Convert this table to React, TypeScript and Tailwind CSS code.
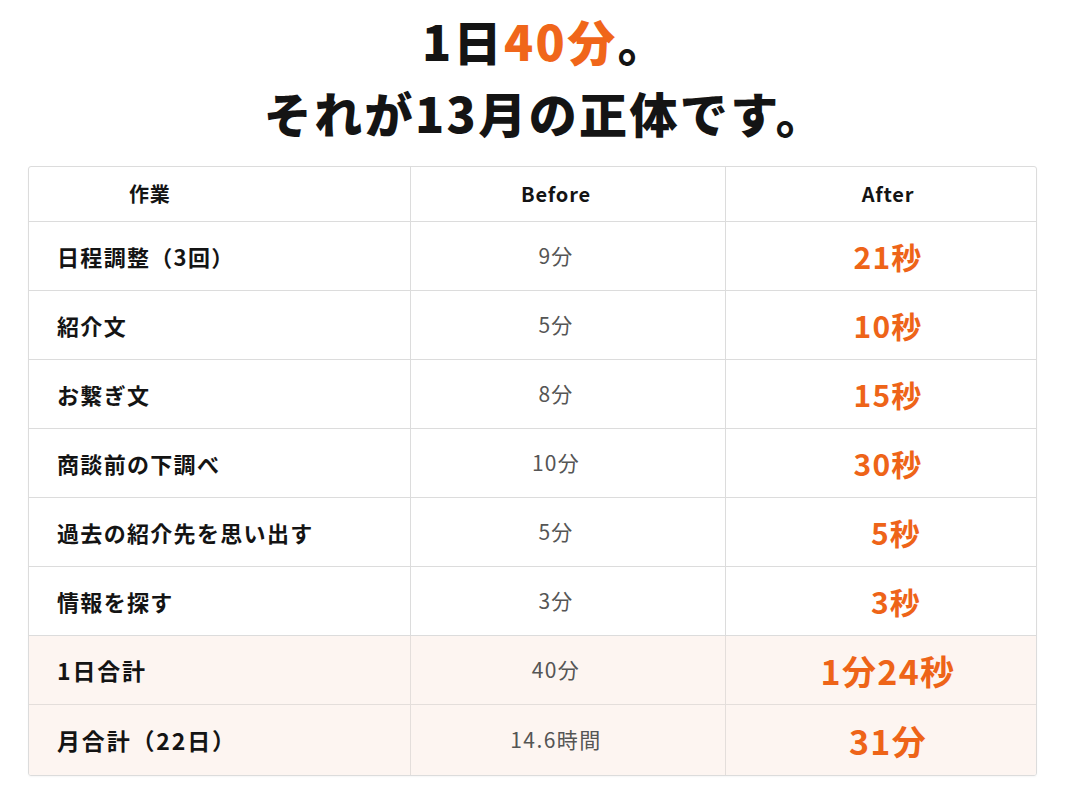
const rows = [
  { task: "日程調整（3回）", before: "9分", after: "21秒" },
  { task: "紹介文", before: "5分", after: "10秒" },
  { task: "お繋ぎ文", before: "8分", after: "15秒" },
  { task: "商談前の下調べ", before: "10分", after: "30秒" },
  { task: "過去の紹介先を思い出す", before: "5分", after: "5秒", pad: true },
  { task: "情報を探す", before: "3分", after: "3秒", pad: true },
];

const totals = [
  { task: "1日合計", before: "40分", after: "1分24秒" },
  { task: "月合計（22日）", before: "14.6時間", after: "31分" },
];

const font = { fontFamily: '"Noto Sans CJK JP", "Noto Sans", sans-serif' };

export default function App() {
  return (
    <div className="min-h-screen w-[1066px] bg-white text-[#141414]" style={font}>
      <h1 className="pl-[24px] pt-[4px] text-center text-[48px] font-black leading-[72px] tracking-[0.05em]">
        <span>1日</span>
        <span className="text-[#f0661a]">40分</span>
        <span>。</span>
        <br />
        それが13月の正体です。
      </h1>

      <div className="mx-[28px] mt-[18px] w-[1009px] overflow-hidden rounded-[3px] border border-[#dcdcdc] shadow-[0_1px_2px_rgba(0,0,0,0.04)]">
        <div className="grid h-[55px] grid-cols-[382px_315px_1fr] border-b border-[#dcdcdc] text-[20px] font-semibold tracking-[0.04em]">
          <div className="flex items-center border-r border-[#dcdcdc] pl-[100px]">作業</div>
          <div className="flex items-center justify-center border-r border-[#dcdcdc] pr-[24px]">Before</div>
          <div className="flex items-center justify-center pl-[14px]">After</div>
        </div>

        {rows.map((r) => (
          <div
            key={r.task}
            className="grid h-[69px] grid-cols-[382px_315px_1fr] border-b border-[#dcdcdc]"
          >
            <div className="flex items-center border-r border-[#dcdcdc] pl-[28px] text-[22px] font-bold tracking-[0.06em]">
              {r.task}
            </div>
            <div className="flex items-center justify-center border-r border-[#dcdcdc] pr-[24px] text-[21px] tracking-[0.06em] text-[#555]">
              {r.before}
            </div>
            <div
              className={
                r.pad
                  ? "flex items-center justify-center pl-[30px] text-[30px] font-bold tracking-[0.04em] text-[#ee6418]"
                  : "flex items-center justify-center pl-[14px] text-[30px] font-bold tracking-[0.04em] text-[#ee6418]"
              }
            >
              {r.after}
            </div>
          </div>
        ))}

        {totals.map((r, i) => (
          <div
            key={r.task}
            className={
              i === 0
                ? "grid h-[69px] grid-cols-[382px_315px_1fr] border-b border-[#e4dedb] bg-[#fdf5f1]"
                : "grid h-[70px] grid-cols-[382px_315px_1fr] bg-[#fdf5f1]"
            }
          >
            <div className="flex items-center border-r border-[#e4dedb] pl-[28px] text-[23px] font-bold tracking-[0.08em]">
              {r.task}
            </div>
            <div className="flex items-center justify-center border-r border-[#e4dedb] pr-[24px] text-[21px] tracking-[0.07em] text-[#555]">
              {r.before}
            </div>
            <div className="flex items-center justify-center pl-[14px] text-[34px] font-bold tracking-[0.04em] text-[#ee6418]">
              {r.after}
            </div>
          </div>
        ))}
      </div>
    </div>
  );
}
